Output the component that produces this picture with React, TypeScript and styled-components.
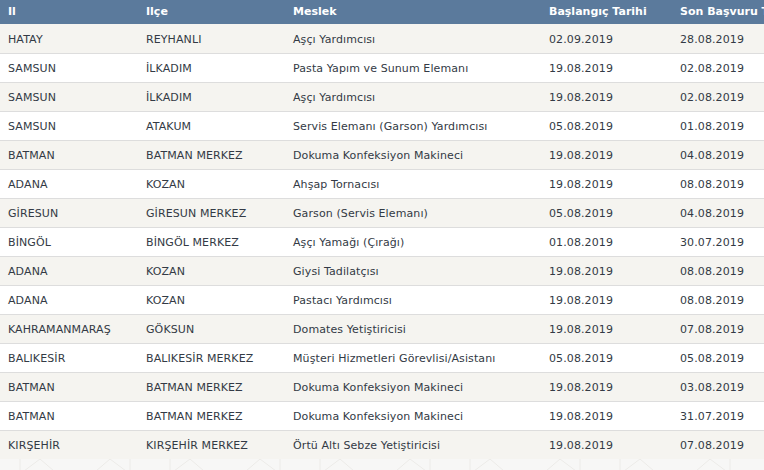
import React from 'react'
import styled, { createGlobalStyle } from 'styled-components'

const GlobalStyle = createGlobalStyle`
  html, body {
    margin: 0;
    padding: 0;
    background: #f7f7f6;
    overflow: hidden;
  }
  body {
    font-family: Verdana, "DejaVu Sans", sans-serif;
  }
`

const Page = styled.div`
  width: 764px;
  height: 470px;
  overflow: hidden;
  display: flex;
  flex-direction: column;
`

const Table = styled.table`
  border-collapse: collapse;
  table-layout: fixed;
  width: 810px;
  flex-shrink: 0;
  font-size: 11px;
  color: #333a45;
`

const HeadCell = styled.th<{ w: number }>`
  width: ${({ w }) => w}px;
  height: 24px;
  padding: 0 8px;
  box-sizing: border-box;
  background: #5b7a9c;
  color: #fff;
  font-weight: bold;
  text-align: left;
  white-space: nowrap;
  overflow: hidden;
  vertical-align: middle;
  line-height: 22px;
`

const Row = styled.tr<{ shaded: boolean }>`
  background: ${({ shaded }) => (shaded ? '#f5f4f0' : '#ffffff')};
  border-bottom: 1px solid #dddddd;
  &:last-child {
    border-bottom: none;
  }
`

const Cell = styled.td`
  height: 29px;
  padding: 2px 8px 0;
  box-sizing: border-box;
  white-space: nowrap;
  overflow: hidden;
  vertical-align: middle;
  letter-spacing: 0.1px;
`

const Pattern = styled.div`
  flex: 1;
  svg {
    display: block;
  }
`

const columns = [
  { title: 'Il', w: 138 },
  { title: 'Ilçe', w: 147 },
  { title: 'Meslek', w: 256 },
  { title: 'Başlangıç Tarihi', w: 131 },
  { title: 'Son Başvuru Tarihi', w: 138 },
]

const rows = [
  ['HATAY', 'REYHANLI', 'Aşçı Yardımcısı', '02.09.2019', '28.08.2019'],
  ['SAMSUN', 'İLKADIM', 'Pasta Yapım ve Sunum Elemanı', '19.08.2019', '02.08.2019'],
  ['SAMSUN', 'İLKADIM', 'Aşçı Yardımcısı', '19.08.2019', '02.08.2019'],
  ['SAMSUN', 'ATAKUM', 'Servis Elemanı (Garson) Yardımcısı', '05.08.2019', '01.08.2019'],
  ['BATMAN', 'BATMAN MERKEZ', 'Dokuma Konfeksiyon Makineci', '19.08.2019', '04.08.2019'],
  ['ADANA', 'KOZAN', 'Ahşap Tornacısı', '19.08.2019', '08.08.2019'],
  ['GİRESUN', 'GİRESUN MERKEZ', 'Garson (Servis Elemanı)', '05.08.2019', '04.08.2019'],
  ['BİNGÖL', 'BİNGÖL MERKEZ', 'Aşçı Yamağı (Çırağı)', '01.08.2019', '30.07.2019'],
  ['ADANA', 'KOZAN', 'Giysi Tadilatçısı', '19.08.2019', '08.08.2019'],
  ['ADANA', 'KOZAN', 'Pastacı Yardımcısı', '19.08.2019', '08.08.2019'],
  ['KAHRAMANMARAŞ', 'GÖKSUN', 'Domates Yetiştiricisi', '19.08.2019', '07.08.2019'],
  ['BALIKESİR', 'BALIKESİR MERKEZ', 'Müşteri Hizmetleri Görevlisi/Asistanı', '05.08.2019', '05.08.2019'],
  ['BATMAN', 'BATMAN MERKEZ', 'Dokuma Konfeksiyon Makineci', '19.08.2019', '03.08.2019'],
  ['BATMAN', 'BATMAN MERKEZ', 'Dokuma Konfeksiyon Makineci', '19.08.2019', '31.07.2019'],
  ['KIRŞEHİR', 'KIRŞEHİR MERKEZ', 'Örtü Altı Sebze Yetiştiricisi', '19.08.2019', '07.08.2019'],
]

// faint geometric background that shows below the table
const BackgroundPattern = () => (
  <svg width='764' height='40'>
    <defs>
      <pattern id='geo' width='150' height='60' patternUnits='userSpaceOnUse'>
        <g fill='none' stroke='#ecebe8' strokeWidth='1'>
          <path d='M0 30 L40 0 M0 30 L40 60 M40 0 L75 30 M40 60 L75 30' />
          <path d='M75 30 L110 0 M75 30 L110 60 M110 0 L150 30 M110 60 L150 30' />
          <path d='M20 0 L20 60 M130 0 L130 60' />
        </g>
      </pattern>
    </defs>
    <rect width='764' height='40' fill='url(#geo)' />
  </svg>
)

export default function App() {
  return (
    <Page>
      <GlobalStyle />
      <Table>
        <thead>
          <tr>
            {columns.map((c) => (
              <HeadCell key={c.title} w={c.w}>{c.title}</HeadCell>
            ))}
          </tr>
        </thead>
        <tbody>
          {rows.map((r, i) => (
            <Row key={i} shaded={i % 2 === 0}>
              {r.map((v, j) => (
                <Cell key={j}>{v}</Cell>
              ))}
            </Row>
          ))}
        </tbody>
      </Table>
      <Pattern>
        <BackgroundPattern />
      </Pattern>
    </Page>
  )
}
